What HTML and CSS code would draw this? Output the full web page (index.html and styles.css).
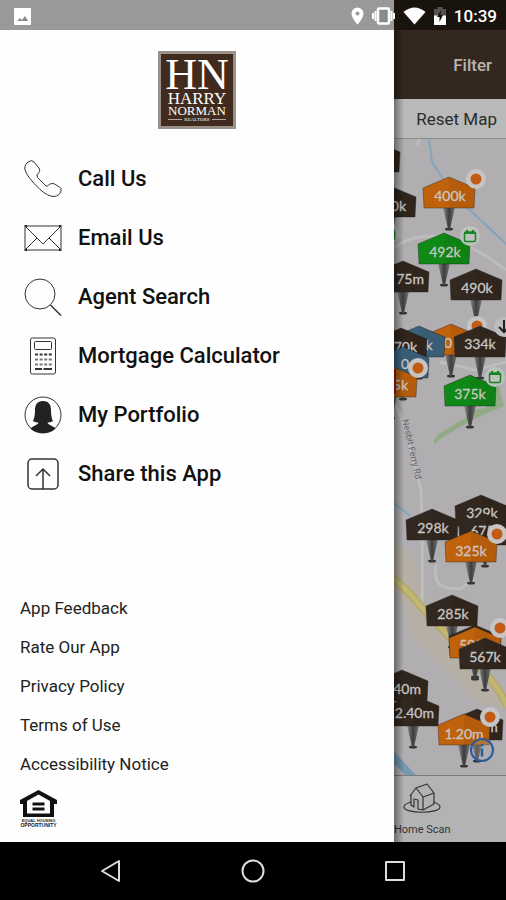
FILE: index.html
```html
<!DOCTYPE html>
<html lang="en">
<head>
    <meta charset="UTF-8">
    <meta name="viewport" content="width=device-width, initial-scale=1.0">
    <title>Harry Norman Realtors</title>
    <link rel="stylesheet" href="styles.css">
</head>
<body>
    <header class="status-bar">
        <svg class="status-picture" width="17" height="17" viewBox="0 0 17 17">
            <rect width="17" height="17" rx="1" fill="#fff"/>
            <path d="M3 13l3-3 2 2 3-4 3 5z" fill="#8a8a8a"/>
        </svg>
        <svg width="13" height="18" viewBox="0 0 13 18">
            <path d="M6.500 0.500a6 6 0 0 0-6 6c0 4.500 6 11 6 11s6-6.500 6-11a6 6 0 0 0-6-6z" fill="#fff"/>
            <circle cx="6.500" cy="6.500" r="2" fill="#999"/>
        </svg>
        <svg width="23" height="18" viewBox="0 0 23 18">
            <path d="M1 6v6M3.500 4v10M22 6v6M19.500 4v10" stroke="#fff" stroke-width="2"/>
            <rect x="6" y="1.500" width="11" height="15" rx="1" fill="#8a8a8a" stroke="#fff" stroke-width="2.500"/>
        </svg>
        <svg width="23" height="18" viewBox="0 0 23 18">
            <path d="M0.500 5Q11.500-4 22.500 5L11.500 17.500z" fill="#fff"/>
        </svg>
        <svg width="12" height="18" viewBox="0 0 12 18">
            <path d="M0 9V2h3.500V0h5v2H12v7z" fill="#55514e"/>
            <path d="M0 8.500h12V18H0z" fill="#fff"/>
            <path d="M7 3L3 10h2.500v5L9 8H6.500z" fill="#19130e"/>
        </svg>
        <span class="clock">10:39</span>
    </header>

    <main class="screen">
        <section class="drawer">
            <svg class="logo" width="78" height="78" viewBox="0 0 78 78" role="img" aria-label="Harry Norman Realtors">
                <rect width="78" height="78" fill="#9a9289"/>
                <rect x="3" y="3" width="72" height="72" fill="#402b1e"/>
                <g fill="#fff" font-family="Liberation Serif, serif" text-anchor="middle">
                    <text x="39" y="38" font-size="44">HN</text>
                    <text x="39" y="53" font-size="17">HARRY</text>
                    <text x="39" y="64" font-size="13">NORMAN</text>
                    <text x="39" y="70" font-size="5">REALTORS</text>
                </g>
                <path d="M10 68.500h14M54 68.500h14" stroke="#b5a89c"/>
            </svg>

            <nav class="menu">
                <a href="#call">
                    <svg width="38" height="38" viewBox="0 0 38 38">
                        <path d="M5 1.500Q8-0.500 10 2l5 6q1.500 2.500 0 4.500Q11.500 15 13.500 17.500L22 26q1.500 1 3-1.500 2-1.500 5-0.800l5.500 3.300q2.500 1.500 1.500 4-1.500 5-7 5.500-6 0-14-7Q2 16 0.800 9 0.500 4 5 1.500z"/>
                    </svg>
                    Call Us
                </a>
                <a href="#email">
                    <svg width="38" height="38" viewBox="0 0 38 38">
                        <path d="M1 7h36v24H1zM1 7l18 18L37 7M1 31l12-12M37 31L25 19"/>
                        <path d="M0 6h3v3zM38 6h-3v3zM0 32h3v-3zM38 32h-3v-3z" fill="#222" stroke="none"/>
                    </svg>
                    Email Us
                </a>
                <a href="#agents">
                    <svg width="38" height="38" viewBox="0 0 38 38">
                        <circle cx="16" cy="16" r="15"/>
                        <path d="M26.500 27L37 37.500" stroke-width="1.500"/>
                    </svg>
                    Agent Search
                </a>
                <a href="#mortgage">
                    <svg width="38" height="38" viewBox="0 0 38 38">
                        <rect x="6.500" y="1" width="25" height="36" rx="2"/>
                        <rect x="10.500" y="4.500" width="17" height="8" rx="1"/>
                        <path d="M11 17.500h17" stroke-width="2" stroke-dasharray="3 1.600"/>
                        <path d="M11 22.500h17M11 27.500h17" stroke-width="2" stroke-dasharray="3 1.600" stroke="#777"/>
                        <path d="M11 32h7M19.500 32H28" stroke-width="2"/>
                    </svg>
                    Mortgage Calculator
                </a>
                <a href="#portfolio">
                    <svg width="38" height="38" viewBox="0 0 38 38">
                        <circle cx="19" cy="19" r="18"/>
                        <path d="M19 5c-6 0-8 4-8 9 0 6-1 9-2 11 2 1.500 4 1.500 5.500 1.500C14 29 10 29 6.500 32.500 10 36 15 37 19 37s9-1 12.500-4.500C28 29 24 29 23.500 26.500c1.500 0 3.500 0 5.500-1.500-1-2-2-5-2-11 0-5-2-9-8-9z" fill="#222" stroke="none"/>
                    </svg>
                    My Portfolio
                </a>
                <a href="#share">
                    <svg width="38" height="38" viewBox="0 0 38 38">
                        <rect x="4" y="4" width="30" height="30" rx="4" stroke-width="1.500"/>
                        <path d="M19 34V14M12 21l7-7 7 7" stroke-width="1.500"/>
                    </svg>
                    Share this App
                </a>
            </nav>

            <footer class="links">
                <a href="#feedback">App Feedback</a>
                <a href="#rate">Rate Our App</a>
                <a href="#privacy">Privacy Policy</a>
                <a href="#terms">Terms of Use</a>
                <a href="#accessibility">Accessibility Notice</a>
                <svg width="37" height="38" viewBox="0 0 37 38" role="img" aria-label="Equal Housing Opportunity">
                    <path d="M18.500 0L0 10v4h3v13h31V14h3v-4zM18.500 4.500L30 11v12.500H7V11z" fill="#111" fill-rule="evenodd"/>
                    <path d="M12.500 14h12M12.500 19h12" stroke="#111" stroke-width="3"/>
                    <g fill="#222" font-family="Liberation Sans, sans-serif" font-weight="700" text-anchor="middle">
                        <text x="18.500" y="32" font-size="4">EQUAL HOUSING</text>
                        <text x="18.500" y="37" font-size="5">OPPORTUNITY</text>
                    </g>
                </svg>
            </footer>
        </section>

        <section class="app">
            <div class="app-bar"><button type="button">Filter</button></div>
            <div class="map-tools"><button type="button">Reset Map</button></div>

            <svg class="map" viewBox="394 139 112 636" preserveAspectRatio="xMaxYMin slice">
                <defs>
                    <linearGradient id="metal">
                        <stop offset="0" stop-color="#8a8a8a"/>
                        <stop offset="0.500" stop-color="#3c3c3c"/>
                        <stop offset="1" stop-color="#777"/>
                    </linearGradient>
                    <!-- origin is the roof peak -->
                    <g id="pin">
                        <ellipse cx="0" cy="52" rx="4" ry="1.500" fill="#333"/>
                        <path d="M-6 30H6L1 52h-2z" fill="url(#metal)"/>
                        <path d="M0 0L26 11L25 31H-25L-26 11z" fill="currentColor" stroke="#222" stroke-opacity="0.500" stroke-width="0.800"/>
                        <path d="M0 0L26 11L25 31H0z" fill="#000" fill-opacity="0.060"/>
                    </g>
                    <g id="open">
                        <circle r="10" fill="#c6c4c4"/>
                        <circle r="5.500" fill="#c25c14"/>
                    </g>
                    <g id="date">
                        <circle r="10" fill="#bcc1bc"/>
                        <rect x="-5.500" y="-4" width="11" height="9.500" rx="1.500" fill="none" stroke="#178424" stroke-width="1.500"/>
                        <path d="M-5.500-3h11M-3-6v2M3-6v2" stroke="#178424" stroke-width="2"/>
                    </g>
                </defs>

                <rect x="394" y="139" width="112" height="636" fill="#b0aeb1"/>
                <path d="M394 545q14 0 22 18l10 40 34 30 20 35 26 30v10q-30 0-50-28L415 640l-21-55z" fill="#b5afa5"/>
                <g fill="none" stroke="#bdbcbe" stroke-width="3">
                    <path d="M394 248q14-12 40-12t72 34M394 402q10 20 15 42l12 46q2 60 1 118"/>
                    <path d="M436 565q-4 20 12 23l12 1 14-10M440 362l35 8 31-8M420 139l-3 6"/>
                </g>
                <path d="M429 139l3 23 20 31 54 51M394 503l16 13" fill="none" stroke="#83a5bd" stroke-width="2"/>
                <path d="M390 753l24 26" stroke="#7599b0" stroke-width="8"/>
                <path d="M506 365q-7 14-6 25l4 16-30 13-34 20-6 6q-1-9 8-13l26-16q2-7 18-8z" fill="#91ab86"/>
                <path d="M392 578q18 14 30 30l24 25 26 28q24 20 36 46" fill="none" stroke="#b5a765" stroke-width="8"/>
                <path d="M392 578q18 14 30 30l24 25 26 28q24 20 36 46" fill="none" stroke="#c2b674" stroke-width="5"/>
                <text class="road" transform="translate(402 420) rotate(77)">Nesbit Ferry Rd</text>

                <g class="dark">
                    <use href="#pin" x="374" y="141"/>
                    <use href="#pin" x="390" y="186"/>
                    <text class="end" x="406" y="211">0k</text>
                </g>
                <use href="#date" x="389" y="234"/>
                <g class="orange"><use href="#pin" x="449" y="177"/><text x="450" y="201">400k</text></g>
                <use href="#open" x="476" y="179"/>
                <g class="green"><use href="#pin" x="444" y="233"/><text x="445" y="257">492k</text></g>
                <use href="#date" x="470" y="236"/>
                <g class="dark">
                    <use href="#pin" x="403" y="261"/><text class="end" x="424" y="284">75m</text>
                    <use href="#pin" x="476" y="269"/><text x="477" y="293">490k</text>
                </g>

                <g class="orange"><use href="#pin" x="451" y="324"/><text x="448" y="348">0</text></g>
                <use href="#open" x="477" y="326"/>
                <g class="blue"><use href="#pin" x="419" y="326"/><text x="429" y="350">k</text></g>
                <g class="dark">
                    <use href="#pin" x="401" y="328"/><text class="end" x="417" y="352">70k</text>
                    <use href="#pin" x="480" y="326"/><text x="480" y="349">334k</text>
                </g>
                <circle cx="504" cy="327" r="10" fill="#bcbcbc"/>
                <path d="M504 320v12M499 327l5 5 5-5" fill="none" stroke="#222" stroke-width="2"/>
                <g class="blue"><use href="#pin" x="403" y="347"/><text x="405" y="369">0</text></g>
                <g class="orange"><use href="#pin" x="391" y="366"/><text class="end" x="408" y="390">5k</text></g>
                <path d="M394 369h2v25h-2z" fill="#a51c18"/>
                <use href="#open" x="418" y="368"/>
                <g class="green"><use href="#pin" x="470" y="375"/><text x="470" y="399">375k</text></g>
                <use href="#date" x="495" y="377"/>

                <g class="dark">
                    <use href="#pin" x="432" y="509"/><text x="433" y="533">298k</text>
                    <use href="#pin" x="481" y="495"/><text x="482" y="518">329k</text>
                    <use href="#pin" x="485" y="514"/><text x="486" y="536">675k</text>
                </g>
                <g class="orange"><use href="#pin" x="471" y="531"/><text x="471" y="556">325k</text></g>
                <use href="#open" x="497" y="534"/>

                <g class="dark">
                    <use href="#pin" x="452" y="595"/><text x="453" y="619">285k</text>
                    <use href="#pin" x="475" y="625"/>
                </g>
                <g class="orange"><use href="#pin" x="475" y="627"/><text x="475" y="650">595k</text></g>
                <use href="#open" x="500" y="628"/>
                <g class="dark">
                    <use href="#pin" x="485" y="638"/><text x="485" y="662">567k</text>
                    <use href="#pin" x="402" y="670"/><text class="end" x="421" y="694">40m</text>
                    <use href="#pin" x="413" y="695"/><text class="end" x="434" y="718">2.40m</text>
                    <use href="#pin" x="477" y="709"/><text x="492" y="732">m</text>
                </g>
                <g class="orange"><use href="#pin" x="464" y="714"/><text x="464" y="739">1.20m</text></g>
                <use href="#open" x="490" y="717"/>
                <circle cx="482" cy="750" r="11" fill="#aaa" fill-opacity="0.300" stroke="#285b9c" stroke-width="2"/>
                <path d="M482 744v2.500M482 748.500v8" stroke="#285b9c" stroke-width="2.500"/>
            </svg>

            <div class="tabs">
                <button type="button">
                    <svg width="38" height="32" viewBox="0 0 38 32" fill="none" stroke="#333" stroke-width="1.200" stroke-linejoin="round">
                        <path d="M8 19q-7 2-7 5c0 7 36 7 36 0q0-3-7-5"/>
                        <path d="M7 13l6-8 11-4 7 9-11 4-7-9M8 12v10l3 2v-8l4 1v9l5 1V14M31 10v11l-11 6"/>
                    </svg>
                    Home Scan
                </button>
            </div>
        </section>
    </main>

    <nav class="system-bar">
        <button type="button" aria-label="Back">
            <svg width="26" height="26" viewBox="0 0 26 26"><path d="M4 13L21 3v20z"/></svg>
        </button>
        <button type="button" aria-label="Home">
            <svg width="26" height="26" viewBox="0 0 26 26"><circle cx="13" cy="13" r="10.500"/></svg>
        </button>
        <button type="button" aria-label="Recent apps">
            <svg width="26" height="26" viewBox="0 0 26 26"><rect x="4" y="4" width="18" height="18"/></svg>
        </button>
    </nav>
</body>
</html>
```

FILE: styles.css
```css
* {
    box-sizing: border-box;
}
body {
    margin: 0;
    min-height: 100vh;
    display: flex;
    flex-direction: column;
    font-family: Roboto, sans-serif;
    background: #000;
}
button {
    border: 0;
    padding: 0;
    background: none;
    font: inherit;
    color: inherit;
    cursor: pointer;
}
a {
    color: #111;
    text-decoration: none;
}
svg {
    flex-shrink: 0;
}

/* grey over the drawer, dark over the map */
.status-bar {
    display: flex;
    align-items: center;
    gap: 8px;
    height: 30px;
    padding: 2px 9px 0 14px;
    background: linear-gradient(to left, #19130e 112px, #999 112px);
}
.status-picture {
    margin-right: auto;
}
.clock {
    font-size: 17px;
    font-weight: 500;
    color: #fff;
}

.screen {
    flex: 1;
    display: flex;
}
.drawer {
    flex: 1;
    display: flex;
    flex-direction: column;
    padding: 21px 20px 14px;
    background: #fefefe;
}
.logo {
    align-self: center;
    margin-bottom: 20px;
}
.menu a {
    display: flex;
    align-items: center;
    gap: 16px;
    height: 59px;
    padding-left: 4px;
    font-size: 22px;
    font-weight: 500;
}
.menu svg {
    fill: none;
    stroke: #333;
    stroke-width: 1;
}
.links {
    display: flex;
    flex-direction: column;
    margin-top: auto;
}
.links a {
    font-size: 17px;
    line-height: 39px;
    color: #222;
}
.links svg {
    margin-top: 6px;
}

.app {
    position: relative;
    width: 112px;
    display: flex;
    flex-direction: column;
    overflow: hidden;
    background: #b3b3b3;
}
/* shadow that the drawer casts */
.app::after {
    content: "";
    position: absolute;
    inset: 0 auto 0 0;
    width: 10px;
    background: linear-gradient(to right, rgba(0, 0, 0, 0.4), transparent);
}
.app-bar {
    display: flex;
    align-items: center;
    justify-content: flex-end;
    height: 69px;
    padding-right: 14px;
    font-size: 17px;
    font-weight: 500;
    color: #bbb5b1;
    background: #34271f;
}
.map-tools {
    display: flex;
    align-items: center;
    justify-content: flex-end;
    height: 40px;
    padding-right: 9px;
    border-bottom: 1px solid #8c8c8c;
    font-size: 17px;
    color: #2b2b2b;
    white-space: nowrap;
    background: #b9b9b9;
}

.map {
    flex: 1;
    width: 100%;
    min-height: 0;
}
.map text {
    font-family: Lato, sans-serif;
    font-size: 14px;
    text-anchor: middle;
    fill: #c9c6c4;
    stroke: #c9c6c4;
    stroke-width: 0.3px;
}
.map .end {
    text-anchor: end;
}
.map .road {
    font-family: Roboto, sans-serif;
    font-size: 9px;
    text-anchor: start;
    fill: #666;
    stroke: none;
}
.dark {
    color: #32281f;
}
.orange {
    color: #c0620c;
}
.green {
    color: #108a17;
}
.blue {
    color: #3c637d;
}

.tabs {
    display: flex;
    height: 67px;
    padding-top: 7px;
    border-top: 1px solid #7c7c7c;
}
.tabs button {
    display: flex;
    flex-direction: column;
    align-items: center;
    gap: 8px;
    font-size: 11px;
    color: #333;
    white-space: nowrap;
}

.system-bar {
    display: flex;
    height: 58px;
    padding: 0 8%;
    background: #000;
}
.system-bar button {
    flex: 1;
    display: flex;
    align-items: center;
    justify-content: center;
}
.system-bar svg {
    fill: none;
    stroke: #ddd;
    stroke-width: 2;
    stroke-linejoin: round;
}
```
